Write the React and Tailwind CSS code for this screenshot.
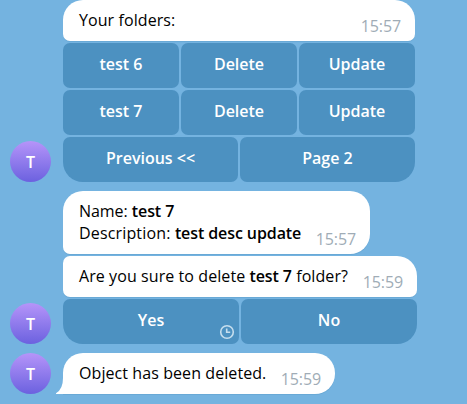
function Avatar() {
  return (
    <div className="flex size-[41px] shrink-0 items-center justify-center rounded-full bg-linear-to-b from-[#b694f9] to-[#6c61df] text-[16px] font-semibold text-white">
      T
    </div>
  );
}

function Bubble({ children, time, className = "" }) {
  return (
    <div className={`flex items-end justify-between bg-white pl-4 shadow-[0_1px_0_#69a9d6] ${className}`}>
      <div className="pb-2.5 leading-[22px] tracking-[0.08px] whitespace-nowrap text-black">{children}</div>
      <time className="pb-1 leading-[22px] tracking-[-0.1px] text-[#a0acb6]">{time}</time>
    </div>
  );
}

function Strong({ children }) {
  return <b className="font-semibold tracking-[-0.09px]">{children}</b>;
}

function Button({ children, className = "rounded-[7px]" }) {
  return (
    <button className={`relative h-[45px] min-w-0 flex-1 bg-[#4c91c1] pb-1 text-center font-semibold text-white ${className}`}>
      {children}
    </button>
  );
}

function ClockIcon() {
  return (
    <svg className="absolute right-1 bottom-1 size-4" viewBox="0 0 16 16" fill="none" stroke="#c6deee" strokeWidth="1.6">
      <circle cx="8" cy="8" r="6.3" />
      <path d="M7.7 4.6v3.7h3.5" />
    </svg>
  );
}

export default function App() {
  return (
    <main className="h-[404px] w-[467px] overflow-hidden bg-[#74b3e0] pl-2.5 font-['Open_Sans',sans-serif] text-[16px]">
      <section className="flex items-end gap-3">
        <Avatar />
        <div className="flex w-[352px] flex-col gap-0.5">
          <Bubble time="15:57" className="h-[41px] rounded-t-[20px] rounded-b-[7px] pr-3.5">
            Your folders:
          </Bubble>
          {["test 6", "test 7"].map((name) => (
            <div key={name} className="flex gap-0.5">
              <Button>{name}</Button>
              <Button>Delete</Button>
              <Button>Update</Button>
            </div>
          ))}
          <div className="flex gap-0.5">
            <Button className="rounded-[7px] rounded-bl-[20px]">Previous &lt;&lt;</Button>
            <Button className="rounded-[7px] rounded-br-[20px]">Page 2</Button>
          </div>
        </div>
      </section>

      <section className="mt-[9px] flex items-end gap-3">
        <Avatar />
        <div className="flex w-[354px] flex-col gap-0.5">
          <Bubble time="15:57" className="h-[63px] w-[307px] rounded-[20px] rounded-bl-[7px] pr-3.5">
            <span className="tracking-[-0.05px]">Name: </span><Strong>test 7</Strong>
            <br />
            <span className="tracking-[0.16px]">Description: </span><Strong>test desc update</Strong>
          </Bubble>
          <Bubble time="15:59" className="h-[41px] rounded-[7px] rounded-tr-[20px] pr-3.5">
            Are you sure to delete <Strong>test 7</Strong> folder?
          </Bubble>
          <div className="flex gap-0.5">
            <Button className="rounded-[7px] rounded-bl-[20px]">
              Yes
              <ClockIcon />
            </Button>
            <Button className="rounded-[7px] rounded-br-[20px]">No</Button>
          </div>
        </div>
      </section>

      <section className="mt-[9px] flex items-end gap-3">
        <Avatar />
        <div className="relative">
          <svg className="absolute bottom-0 -left-[7px] h-5 w-[8px]" viewBox="0 0 8 20" fill="#fff">
            <path d="M7 0H8V20H0.5Q-.4 20 .3 19Q7 15 7 4Z" />
          </svg>
          <Bubble time="15:59" className="h-[41px] w-[272px] rounded-[20px] rounded-bl-none pr-3.5">
            Object has been deleted.
          </Bubble>
        </div>
      </section>
    </main>
  );
}
